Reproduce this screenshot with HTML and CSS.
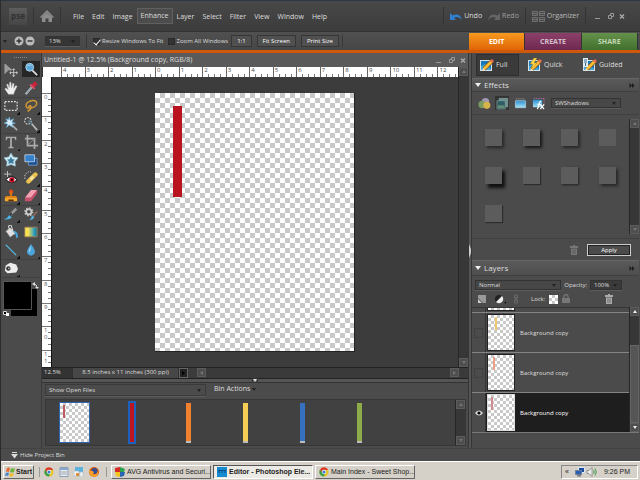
FILE: index.html
```
<!DOCTYPE html>
<html lang="en">
<head>
<meta charset="utf-8">
<title>Editor</title>
<link rel="stylesheet" href="styles.css">
</head>
<body>
<svg class="defs" aria-hidden="true">
  <defs>
    <linearGradient id="rainbow"><stop offset="0" stop-color="#fff04c"/><stop offset=".3" stop-color="#f2dc5a"/><stop offset=".75" stop-color="#2f9fbd"/><stop offset="1" stop-color="#14709f"/></linearGradient>
    <linearGradient id="sky" x2="0" y2="1"><stop offset="0" stop-color="#2b8fd0"/><stop offset="1" stop-color="#a8e2f6"/></linearGradient>
    <symbol id="mode" viewBox="0 0 14 14"><path fill="#d6e2e8" d="M0 2h12v11H0z"/><path fill="#1678b8" d="M1 3h10v9H1z"/><path fill="#44a6d8" d="M1 8l4-2 6 5v1H1z"/><path stroke="#7a4510" stroke-width="4" d="M4 11l8-8"/><path stroke="#f8bd36" stroke-width="3" d="M4 11l8-8"/><path fill="#f5e2bd" d="M2 13l1-3 2 2z"/><path stroke="#e56b55" stroke-width="3" d="M11 4l2-2"/></symbol>
    <symbol id="trash" viewBox="0 0 8 10"><path fill="currentColor" d="M3 0h2v1h3v2H0V1h3zM1 3.500h6V10H1z"/><path stroke="#4b4b4b" stroke-width=".6" d="M3 4.500V9M5 4.500V9"/></symbol>
    <symbol id="chrome" viewBox="0 0 12 12"><circle cx="6" cy="6" r="5.500" fill="#e9c62f"/><path fill="#d83a2f" d="M1.200 3.200A5.500 5.500 0 0 1 11 3.500H6L4 7z"/><path fill="#3a9b4a" d="M1.200 3.200L4 7l3 2-1 2.500A5.500 5.500 0 0 1 1.200 3.200"/><circle cx="6" cy="6" r="2.600" fill="#fff"/><circle cx="6" cy="6" r="1.900" fill="#3b79c9"/></symbol>
    <symbol id="winctl" viewBox="0 0 32 8"><path fill="none" stroke="#999" d="M2 6.500h5M15.500 3.500h3v3h-3zM17.500 3v-1.500h3v3H19"/><path stroke="#aaa" stroke-width="1.300" d="M27 2.500l4 4M31 2.500l-4 4"/></symbol>
    <symbol id="ff" viewBox="0 0 6 6"><path fill="#1c1c1c" d="M0 0l3 3-3 3zM3 0l3 3-3 3z"/></symbol>
  </defs>
</svg>
<div class="app">
  <header class="menubar">
    <span class="logo">pse</span>
    <button class="home" aria-label="Home"><svg width="16" height="14" viewBox="0 0 16 14"><path fill="#888" d="M8 1l7 7-1 1-6-5-6 5-1-1z"/><path fill="#8c8c8c" d="M3 8l5-4 5 4v5H9.500V9.500h-3V13H3z"/></svg></button>
    <nav class="menus"><a href="#">File</a><a href="#">Edit</a><a href="#">Image</a><a href="#" class="hot">Enhance</a><a href="#">Layer</a><a href="#">Select</a><a href="#">Filter</a><a href="#">View</a><a href="#">Window</a><a href="#">Help</a></nav>
    <div class="history">
      <button><svg width="12" height="9" viewBox="0 0 12 9"><path fill="#2f80d0" d="M0 1v7h6L4 6q4-3 8 2Q10 0 2.500 3.500z"/></svg>Undo</button>
      <button class="dim"><svg width="12" height="9" viewBox="0 0 12 9"><path fill="#656565" d="M12 1v7H6l2-2Q4 3 0 8 2 0 9.500 3.500z"/></svg>Redo</button>
    </div>
    <button class="organizer"><svg width="13" height="11" viewBox="0 0 13 11"><path fill="#4b4b4b" stroke="#707070" d="M.5.500h5v4h-5zM7.500.500h5v4h-5zM.5 6.500h5v4h-5zM7.500 6.500h5v4h-5zM1 2.500h4M8 2.500h4M1 8.500h4M8 8.500h4"/></svg>Organizer</button>
    <button class="winctl" aria-label="Window controls"><svg width="32" height="8"><use href="#winctl"/></svg></button>
  </header>

  <div class="options">
    <span class="caret"></span>
    <div class="zoomers">
      <button aria-label="Zoom in"><svg width="10" height="10" viewBox="0 0 10 10"><circle cx="5" cy="5" r="4.500" fill="#bbb"/><path stroke="#333" stroke-width="1.400" d="M2.500 5h5M5 2.500v5"/></svg></button>
      <button aria-label="Zoom out"><svg width="10" height="10" viewBox="0 0 10 10"><circle cx="5" cy="5" r="4.500" fill="#bbb"/><path stroke="#333" stroke-width="1.400" d="M2.500 5h5"/></svg></button>
    </div>
    <label class="pick zoomval"><select aria-label="Zoom"><option>13%</option></select></label>
    <div class="checks">
      <label><input type="checkbox" checked>Resize Windows To Fit</label>
      <label><input type="checkbox">Zoom All Windows</label>
    </div>
    <div class="opts"><button>1:1</button><button>Fit Screen</button><button>Print Size</button></div>
    <nav class="tabs"><a href="#" class="edit">EDIT</a><a href="#" class="create">CREATE</a><a href="#" class="share">SHARE</a></nav>
  </div>

  <main class="work">
    <aside class="tools">
      <div class="grip"></div>
      <div class="group">
        <button aria-label="Move"><svg viewBox="0 0 16 16"><path fill="#999" stroke="#bbb" stroke-width=".6" d="M1 1l8 7H5l-4 4z"/><path stroke="#c9c9c9" d="M11 7v8M7 11h8"/><path fill="#c9c9c9" d="M11 6l2 2H9zM11 16l2-2H9zM6 11l2-2v4zM16 11l-2-2v4z"/></svg></button>
        <button class="on" aria-label="Zoom"><svg viewBox="0 0 16 16"><path stroke="#ddd" stroke-width="2" d="M9 9l6 6"/><circle cx="6.500" cy="6" r="4.500" fill="#5fa9da" stroke="#b9dcf0"/><path fill="#9bd0ef" d="M3 5q3-4 6-1-3 0-6 1"/></svg></button>
        <button aria-label="Hand"><svg viewBox="0 0 16 16"><path fill="#eee" stroke="#bbb" stroke-width=".5" d="M5 15L1 9l1-1 3 2-2-6 1.500-.5L6 8l.5-6.500H8L8.500 8 10 2.500l1.500.5L11 8.500 13.500 5l1.500 1-3 6-1 3z"/></svg></button>
        <button aria-label="Eyedropper"><svg viewBox="0 0 16 16"><path stroke="#b9c8ce" stroke-width="2.500" d="M2 15l7-8"/><path stroke="#65767c" stroke-width=".8" d="M3 14l6-7"/><path stroke="#c8243d" stroke-width="4.500" d="M9 7l5-5"/><path stroke="#e4566b" stroke-width="2" d="M7 4l5 5"/></svg></button>
      </div>
      <div class="group">
        <button class="more" aria-label="Marquee"><svg viewBox="0 0 16 16"><path fill="none" stroke="#e4e4e4" stroke-width="1.300" stroke-dasharray="2 1.500" d="M1 3h14v10H1z"/></svg></button>
        <button class="more" aria-label="Lasso"><svg viewBox="0 0 16 16"><path fill="none" stroke="#cf9735" stroke-width="1.700" d="M5 11Q0 8 4 4q6-4 10-1 2 5-5 7-5 1-3-2 2-1 2 1 0 3-4 5"/></svg></button>
        <button aria-label="Magic wand"><svg viewBox="0 0 16 16"><path stroke="#aaa" stroke-width="2" d="M7 7l8 8"/><path fill="#d7edfa" stroke="#5badd8" stroke-width=".7" d="M6 0l1 4 4-2-2 4 4 1-4 1 1 4-4-3-3 3 1-4-4-1 4-2-2-3 3 1z"/></svg></button>
        <button class="more" aria-label="Quick selection"><svg viewBox="0 0 16 16"><circle cx="4.500" cy="4.500" r="3.700" fill="none" stroke="#ddd" stroke-width="1.200" stroke-dasharray="2 1.200"/><path stroke="#5c7988" stroke-width="2.500" d="M5 4l5 5"/><path stroke="#bbb" stroke-width="1.800" d="M9 8l6 7"/></svg></button>
      </div>
      <div class="group">
        <button class="more" aria-label="Type"><svg viewBox="0 0 16 16"><path fill="#aaa" d="M2 2h12v4h-1q0-2-2-2.500H9V13l2 1v1H5v-1l2-1V3.500H5Q3 4 3 6H2z"/></svg></button>
        <button aria-label="Crop"><svg viewBox="0 0 16 16"><path fill="none" stroke="#aaa" stroke-width="2" d="M4 0v12h12M1 4h11v12"/><path stroke="#888" d="M4 12l9-9"/></svg></button>
        <button aria-label="Cookie cutter"><svg viewBox="0 0 16 16"><path fill="#d3edf5" stroke="#8ebccd" stroke-width=".8" d="M8 0l2.500 4.500L16 5.500 12.500 10l.5 5-5-2-5 2 .5-5L0 5.500l5.500-1z"/><path fill="#3c7e9b" d="M8 4l1.500 3 3 .5-2 2 .5 3-3-1-3 1 .5-3-2-2 3-.5z"/></svg></button>
        <button aria-label="Straighten"><svg viewBox="0 0 16 16"><path fill="#1d4f91" stroke="#8fb8e0" stroke-width=".7" d="M5 6h10v8H5z"/><path fill="#3580cb" stroke="#d8e6f2" stroke-width=".8" d="M1 2h11v8H1z"/></svg></button>
        <button aria-label="Red eye"><svg viewBox="0 0 16 16"><path stroke="#ccc" d="M4 0v7M0 3.500h8"/><path fill="#fff" stroke="#000" d="M2 10q6-7 13 0-6 6-13 0"/><circle cx="9" cy="10" r="3" fill="#d30f28"/><circle cx="9" cy="10" r="1.200"/></svg></button>
        <button class="more" aria-label="Healing"><svg viewBox="0 0 16 16"><path fill="none" stroke="#ddd" stroke-dasharray="1.500 1.500" d="M1 9V4l4-3h3"/><path stroke="#eac252" stroke-width="5" stroke-linecap="round" d="M5 12l8-8"/><path stroke="#f8e4a0" stroke-width="3.500" d="M7.500 9.500l3-3"/></svg></button>
        <button class="more" aria-label="Clone stamp"><svg viewBox="0 0 16 16"><circle cx="8" cy="3" r="2.500" fill="#df4e16"/><path fill="#df7d17" d="M7 4h2v4h5l1 3H1l1-3h5z"/><path fill="#f4a92c" d="M1 10h14v4H1z"/><path fill="#613408" d="M5 12h6v2H5z"/></svg></button>
        <button class="more" aria-label="Eraser"><svg viewBox="0 0 16 16"><path fill="#f69fb0" d="M8 1h7L8 10H1z"/><path fill="#c9506b" d="M1 10h7l7-9v4l-7 9H1z"/></svg></button>
      </div>
      <div class="group">
        <button class="more" aria-label="Brush"><svg viewBox="0 0 16 16"><path stroke="#9b9b9b" stroke-width="3" d="M7 9l7-7"/><path stroke="#333" stroke-width="2" d="M6 10l3-3"/><path fill="#4cb4e4" d="M6 9l3 3q-3 3-9 2 4-1 6-5"/></svg></button>
        <button class="more" aria-label="Smart brush"><svg viewBox="0 0 16 16"><circle cx="5.500" cy="5.500" r="3" fill="none" stroke="#ccc" stroke-width="2"/><circle cx="5.500" cy="5.500" r="4.500" fill="none" stroke="#ccc" stroke-width="1.500" stroke-dasharray="1.800 1.700"/><path stroke="#8b6758" stroke-width="2" d="M10 11l5-6"/><path fill="#55b4e0" d="M9 9l3 3q-2 3-6 3 3-2 3-6"/></svg></button>
        <button aria-label="Paint bucket"><svg viewBox="0 0 16 16"><path fill="#ddd" stroke="#777" stroke-width=".7" d="M7 3l7 6-7 5-5-7z"/><path fill="none" stroke="#eee" d="M7 8L5 1l3-1 2 6"/><path fill="#46a4dc" d="M10 7q6-1 6 7l-2 1-1-5z"/></svg></button>
        <button aria-label="Gradient"><svg viewBox="0 0 16 16"><path fill="url(#rainbow)" stroke="#a88452" d="M1 2.500h14v11H1z"/></svg></button>
        <button class="more" aria-label="Line"><svg viewBox="0 0 16 16"><path stroke="#55b7df" stroke-width="1.300" d="M2 2l12 12"/></svg></button>
        <button class="more" aria-label="Blur"><svg viewBox="0 0 16 16"><path fill="#4ba4dc" d="M8 1q6 8 4 11-4 5-8 0Q2 9 8 1"/><path fill="#9bd5f3" d="M8 3q-4 6-2 8 2-3 2-8"/></svg></button>
      </div>
      <div class="group">
        <button class="more" aria-label="Sponge"><svg viewBox="0 0 16 16"><path fill="#eee" d="M2 5l5-3 7 2 2 5-2 4-10 1-3-3z"/><circle cx="5" cy="8.500" r="2.500" fill="#333"/><circle cx="5.500" cy="8.500" r="1" fill="#aaa"/></svg></button>
      </div>
      <div class="colors"><svg width="36" height="36" viewBox="0 0 36 36"><path d="M8 8h26v27H8z"/><path stroke="#555" d="M.5.500h28v28H.5z"/><path fill="none" stroke="#ddd" d="M31 3q3 0 3 4"/><path fill="#ddd" d="M29 3l3-2v4zM32 6h4l-2 2z"/><path fill="#000" stroke="#ddd" d="M.5 30.500h3v3h-3z"/><path fill="#fff" d="M3 32h3v3H3z"/></svg></div>
    </aside>

    <section class="doc">
      <div class="doctitle"><span>Untitled-1 @ 12.5% (Background copy, RGB/8)</span><svg width="32" height="8"><use href="#winctl"/></svg></div>
      <div class="hruler"><div class="inches"><i>4</i><i>3</i><i>2</i><i>1</i><i>0</i><i>1</i><i>2</i><i>3</i><i>4</i><i>5</i><i>6</i><i>7</i><i>8</i><i>9</i><i>10</i><i>11</i><i>12</i></div></div>
      <div class="vruler"><div class="inches"><i>0</i><i>1</i><i>2</i><i>3</i><i>4</i><i>5</i><i>6</i><i>7</i><i>8</i><i>9</i><i>1<br>0</i><i>1<br>1</i></div></div>
      <div class="stage"><div class="page checker"><div class="strip"></div></div></div>
      <div class="scroll docscroll"><b class="up"></b><b class="down"></b></div>
      <div class="status"><span class="pct">12.5%</span><span class="size">8.5 inches x 11 inches (300 ppi)</span><button class="play" aria-label="Status menu"></button><div class="hscroll"><b class="left"></b><b class="right"></b></div></div>
    </section>

    <section class="bin">
      <div class="splitter"><span class="caret"></span></div>
      <div class="binbar"><label class="pick"><select aria-label="Files shown"><option>Show Open Files</option></select></label><button class="actions">Bin Actions <span class="caret"></span></button></div>
      <div class="thumbs">
        <div class="files"><div><span class="thumb checker"><span class="mini"></span></span></div><div><span class="bar red"></span></div><div><span class="bar orange"></span></div><div><span class="bar yellow"></span></div><div><span class="bar blue"></span></div><div><span class="bar green"></span></div></div>
        <div class="scroll"><b class="up"></b><b class="down"></b></div>
      </div>
    </section>

    <div class="divider"><span></span></div>

    <aside class="panels">
      <nav class="modes"><a href="#" class="on"><svg width="14" height="14"><use href="#mode"/></svg>Full</a><a href="#"><svg width="14" height="14" viewBox="0 0 14 14"><use href="#mode"/><path fill="#ffdc4b" stroke="#b67b13" stroke-width=".5" d="M6 0L2 6h3L3 11l6-6H6l3-5z"/></svg>Quick</a><a href="#"><svg width="14" height="14" viewBox="0 0 14 14"><use href="#mode"/><path fill="#e2edf4" d="M0 0h5v9H0z"/><path stroke="#386b92" d="M1 2h3M1 4h3M2.500 5v3"/></svg>Guided</a></nav>
      <h2><span class="tri"></span>Effects<svg class="ff" width="6" height="5"><use href="#ff"/></svg></h2>
      <div class="fxbar">
        <button aria-label="Filters"><svg viewBox="0 0 14 14"><circle cx="8" cy="5" r="4" fill="#a298b4"/><circle cx="4.500" cy="8" r="4" fill="#7a9a62"/><circle cx="9.500" cy="9" r="3.800" fill="#d6b347"/></svg></button>
        <button class="on" aria-label="Layer styles"><svg viewBox="0 0 14 14"><path fill="#728f92" d="M3 1h10v10H3z"/><path fill="#305c66" stroke="#8aa59f" stroke-width=".7" d="M1 4h9v9H1z"/><path fill="#648e75" d="M2 9h7v3H2z"/></svg></button>
        <button aria-label="Photo effects"><svg viewBox="0 0 14 14"><path stroke="#aaa" stroke-dasharray="1 1" d="M2 2h10"/><path fill="url(#sky)" stroke="#b2d8e6" stroke-width=".7" d="M1.500 4h11v7.500h-11z"/></svg></button>
        <button aria-label="All effects"><svg viewBox="0 0 14 14"><path stroke="#c276b0" stroke-dasharray="1 1" d="M2 1.500h11M13 2v8"/><path fill="url(#sky)" d="M1 3h10v8H1z"/><path fill="none" stroke="#fff" stroke-width="1.300" d="M10 5Q8 4 7.500 8t-2 5M6 8h3M9 8l4 5M13 8l-4 5"/></svg></button>
        <label class="pick"><select aria-label="Style library"><option>SWShadows</option></select></label>
      </div>
      <div class="fx">
        <div class="swatches"><span class="s3"></span><span class="s4"></span><span class="s3"></span><span></span><span class="s5"></span><span class="s1"></span><span class="s2"></span><span class="s3"></span><span class="s1"></span></div>
        <div class="scroll"><b class="up"></b><b class="down"></b></div>
      </div>
      <div class="apply"><svg class="dimtrash" width="8" height="10"><use href="#trash"/></svg><button>Apply</button></div>
      <h2><span class="tri"></span>Layers<svg class="ff" width="6" height="5"><use href="#ff"/></svg></h2>
      <div class="blend"><label class="pick"><select aria-label="Blend mode"><option>Normal</option></select></label><label for="opacity">Opacity:</label><span class="pick op"><select id="opacity"><option>100%</option></select></span></div>
      <div class="locks">
        <svg width="52" height="10" viewBox="0 0 52 10"><path fill="#999" d="M3 1h8v8H8L3 4z"/><path fill="#ccc" d="M3 5l4 4H3z"/><circle cx="24" cy="5" r="4" fill="#222"/><path fill="#eee" d="M27 2a4 4 0 0 1-6 6z"/><path fill="#111" d="M29 8h2v2z"/><path fill="none" stroke="#6b6b6b" d="M39.500 1h3v3h-3zM39.500 6h3v3h-3zM41 3v4"/></svg>
        <span class="locklabel">Lock:</span>
        <span class="lockpx checker"></span>
        <svg width="8" height="10" viewBox="0 0 8 10"><path fill="none" stroke="#777" stroke-width="1.300" d="M2 5V2q2-3 4 0v3"/><path fill="#777" d="M0 4h8v5H0z"/></svg>
        <svg class="bintrash" width="8" height="10"><use href="#trash"/></svg>
      </div>
      <div class="layers">
        <div class="rows">
          <div class="row cut"><span class="eye"></span><span class="lt checker"></span></div>
          <div class="row"><span class="eye"><i></i></span><span class="lt checker"><span class="mini y"></span></span>Background copy</div>
          <div class="row"><span class="eye"><i></i></span><span class="lt checker"><span class="mini o"></span></span>Background copy</div>
          <div class="row sel"><span class="eye"><svg width="8" height="6" viewBox="0 0 8 6"><path fill="#ddd" d="M0 3q4-5 8 0-4 5-8 0"/><circle cx="4" cy="3" r="1.600"/></svg></span><span class="lt checker"><span class="mini"></span></span>Background copy</div>
        </div>
        <div class="scroll lit"><b class="up"></b><u></u><b class="down"></b></div>
      </div>
    </aside>
  </main>

  <div class="hidebar"><svg width="7" height="7" viewBox="0 0 7 7"><path fill="#ddd" d="M1 0h5v1H1zM0 2h7L3.500 6.500z"/></svg>Hide Project Bin</div>

  <footer class="taskbar">
    <button class="start"><svg width="11" height="10" viewBox="0 0 11 10"><path fill="#e7652b" d="M2 1q2-1 3 0L4 5Q3 4 1 5z"/><path fill="#6fb33f" d="M6 1q2 1 4 0L9 5Q7 6 5 5z"/><path fill="#4282cf" d="M1 6q2-1 3 0L3 9Q2 8 0 9z"/><path fill="#efbd2b" d="M5 6q2 1 4 0L8 9Q6 10 4 9z"/></svg>Start</button>
    <div class="quick">
      <svg width="10" height="10"><use href="#chrome"/></svg>
      <svg width="10" height="10" viewBox="0 0 10 10"><path fill="#e8edf2" stroke="#8b9db4" d="M1 .5h8v9H1z"/><path fill="#89a8cf" d="M1 1h8v2H1z"/><path stroke="#9ba7b5" d="M2 5h6M2 7h6"/></svg>
      <svg width="10" height="10" viewBox="0 0 10 10"><path fill="#5cb1dd" d="M1 0h8v5H1z"/><path fill="#f4f6f7" stroke="#9fb6c5" stroke-width=".6" d="M0 4h5v5H0zM6 5h3v5H6z"/><path fill="#e18d3b" d="M2 6h3v3H2z"/></svg>
      <svg width="10" height="10" viewBox="0 0 10 10"><circle cx="5" cy="5" r="5" fill="#dc5d18"/><circle cx="5.500" cy="4" r="3" fill="#344c91"/><path fill="#f7a128" d="M0 3q2 1 3 1l2 1-1 2q3 2 5-3 1 5-4 6-5-1-5-7"/></svg>
    </div>
    <button class="task"><svg width="10" height="10" viewBox="0 0 10 10"><path fill="#d92b26" d="M0 1l5-1v5H0z"/><path fill="#2aa24b" d="M5 0l5 2-1 3H5z"/><path fill="#f3c51c" d="M0 5h5v5L1 9z"/><path fill="#2864b4" d="M5 5h5L9 9l-4 1z"/></svg><span>AVG Antivirus and Securi...</span></button>
    <button class="task on"><svg width="10" height="10" viewBox="0 0 10 10"><path fill="#168bd2" d="M0 0h10v10H0z"/><path stroke="#0a4f86" d="M1 5h2M4 5h2M7 5h2M1 3.500h8"/></svg><span>Editor - Photoshop Ele...</span></button>
    <button class="task"><svg width="10" height="10"><use href="#chrome"/></svg><span>Main Index - Sweet Shop...</span></button>
    <div class="tray"><span>«</span><svg width="22" height="10" viewBox="0 0 22 10"><path fill="#1d4b9f" stroke="#dce6f2" d="M3.500.500h6v5h-6z"/><path fill="#2b5fb4" stroke="#6f7f96" d="M.5 3.500h6v4h-6z"/><path fill="#777" d="M2 8h4v1.500H2z"/><path fill="#eee" stroke="#777" stroke-width=".7" d="M12 3.500h2l3-3v9l-3-3h-2z"/><path fill="none" stroke="#4a9c53" d="M18.500 3q1.500 2 0 4M20 1.500q2.500 3.500 0 7"/></svg><time>9:26 PM</time></div>
  </footer>
</div>
</body>
</html>
```
FILE: styles.css
```
* { box-sizing: border-box; }
html, body { margin: 0; height: 100%; }
body { font: 6px/10px "Open Sans", "Noto Sans", sans-serif; color: #dedede; background: #4b4b4b; overflow: hidden; }
button, select, input { font: inherit; color: inherit; margin: 0; padding: 0; border: 0; background: none; }
button { display: flex; align-items: center; justify-content: center; }
a { color: inherit; text-decoration: none; }
svg { display: block; flex: none; }
i, b, u { font-style: normal; font-weight: inherit; text-decoration: none; }
.defs { position: absolute; width: 0; height: 0; }
.checker { background: conic-gradient(#c9c9c9 25%, #fff 0 50%, #c9c9c9 0 75%, #fff 0) 0 0 / 10px 10px; }
.caret { width: 0; height: 0; border: 2px solid transparent; border-top: 3px solid #222; border-bottom: 0; }

.app { height: 100vh; display: grid; grid-template-rows: 31px 22px minmax(0, 1fr) 13px 19px; border-left: 1px solid #2c2c2c; }

.menubar { display: flex; align-items: center; font-size: 7px; background: linear-gradient(#484848, #3c3c3c); border-top: 1px solid #2c3746; }
.logo { width: 18px; height: 17px; margin-left: 8px; font-size: 8px; line-height: 15px; font-weight: 700; text-align: center; color: #303030; background: linear-gradient(#5d5d5d, #454545); }
.home { width: 28px; height: 18px; margin-left: 6px; border: 1px solid #353535; border-width: 0 1px; }
.menus { display: flex; align-items: center; margin-left: 8px; }
.menus a { padding: 0 4px; line-height: 13px; }
.menus .hot { line-height: 14px; border: 1px solid #606060; background: #4c4c4c; padding: 0 3px; }
.history { display: flex; gap: 6px; margin-left: auto; height: 18px; padding: 0 6px; border: 1px solid #333; border-width: 0 1px; }
.history button, .organizer { gap: 2px; }
.history .dim { color: #a0a0a0; }
.organizer { height: 18px; padding: 0 6px; border-right: 1px solid #333; color: #bbb; }
.winctl { margin: 0 15px 0 7px; }

.options { display: flex; align-items: center; padding-left: 2px; background: linear-gradient(#505050, #474747); border-top: 1px solid #333; border-bottom: 3px solid #d0580a; }
.zoomers { display: flex; gap: 1px; margin-left: 7px; }
.pick { display: flex; align-items: center; height: 10px; border: 1px solid #333; background: #474747; box-shadow: 0 1px #5c5c5c; }
.pick::after { content: ""; margin: 0 4px 0 -8px; border: 2px solid transparent; border-top: 3px solid #222; border-bottom: 0; pointer-events: none; }
.pick select { appearance: none; width: 100%; min-width: 0; height: 8px; line-height: 8px; padding: 0 3px; outline: 0; }
.zoomval { width: 35px; margin-left: 10px; background: #353535; }
.checks { display: flex; gap: 4px; margin-left: 6px; padding-left: 6px; border-left: 1px solid #383838; }
.checks label { display: flex; align-items: center; gap: 2px; line-height: 14px; }
.checks input { appearance: none; width: 7px; height: 7px; background: #333; border: 1px solid #292929; }
.checks input:checked::after { content: ""; display: block; width: 3px; height: 6px; border: 1px solid #fff; border-width: 0 1px 1px 0; transform: rotate(40deg); margin: -1px 0 0 1px; }
.opts { display: flex; gap: 5px; margin-left: 3px; padding-right: 3px; border-right: 1px solid #383838; }
.opts button { height: 12px; padding: 0 5px; border: 1px solid #363636; background: #505050; color: #fff; }
.tabs { display: flex; align-self: stretch; margin: 1px 2px 0 auto; width: 169px; text-align: center; font-size: 7px; font-weight: 700; line-height: 18px; }
.tabs a { flex: 1; color: #d2c0cc; border-right: 1px solid #333; }
.tabs .edit { background: linear-gradient(#f79a1e, #df6407); color: #fff; }
.tabs .create { background: linear-gradient(#8c4069, #6f2850); }
.tabs .share { background: linear-gradient(#65924a, #41702e); color: #c0d6b4; }

.work { display: grid; grid-template: minmax(0, 1fr) 70px / 41px minmax(0, 1fr) 4px 168px; min-height: 0; }

.tools { grid-row: 1 / 3; padding: 3px 0 0 1px; border-right: 1px solid #3a3a3a; }
.grip { width: 14px; height: 5px; margin-left: 12px; background: repeating-linear-gradient(90deg, #888 0 1px, transparent 1px 2px) 0 1px / 100% 1px no-repeat; }
.group { display: grid; grid-template-columns: 20px 18px; box-shadow: 0 1px #404040; }
.group button { width: 18px; height: 18px; }
.group svg { width: 14px; height: 14px; }
.group .on { height: 16px; background: #262626; }
.group .more { background: linear-gradient(135deg, transparent 50%, #111 0) right bottom / 3px 3px no-repeat; }
.colors { margin: 4px 0 0 1px; }

.doc { grid-column: 2; display: grid; grid-template: 14px 10px minmax(0, 1fr) 11px / 10px minmax(0, 1fr) 10px; min-height: 0; background: #3c3c3c; }
.doctitle { grid-row: 1; grid-column: 1 / 4; display: flex; align-items: center; justify-content: space-between; padding: 0 2px; font-size: 7px; background: #5a5a5a; }
.hruler { grid-row: 2; grid-column: 1 / 3; padding-left: 18px; overflow: hidden; background: #fff; color: #444; border-left: 1px solid #333; }
.hruler .inches { display: grid; grid-template-columns: repeat(17, 1fr); width: 400px; height: 10px; }
.hruler i { line-height: 7px; padding-left: 1px; border-left: 1px solid #666; background: repeating-linear-gradient(90deg, transparent 0 5px, #777 5px 6px) 0 100% / 100% 3px no-repeat; }
.vruler { grid-row: 3; overflow: hidden; padding-top: 16px; background: #fff; color: #555; border-right: 1px solid #111; }
.vruler .inches { display: grid; grid-template-rows: repeat(12, 1fr); height: 280px; }
.vruler i { line-height: 7px; padding-left: 2px; border-top: 1px solid #777; background: repeating-linear-gradient(transparent 0 5px, #777 5px 6px) 100% 0 / 3px 100% no-repeat; }
.stage { grid-row: 3; padding: 16px 0 0 103px; overflow: hidden; }
.page { width: 200px; height: 259px; padding: 13px 0 0 18px; border-right: 1px solid #222; border-bottom: 1px solid #222; }
.strip { width: 9px; height: 91px; background: #b9131f; }
.docscroll { grid-column: 3; grid-row: 2 / 4; }
.status { grid-column: 1 / 4; display: flex; line-height: 9px; border-top: 1px solid #222; }
.pct { width: 30px; padding-left: 2px; background: #333; }
.size { width: 107px; text-align: center; background: #474747; border: 1px solid #303030; border-width: 0 1px; }
.play { width: 9px; background: #222; border: 1px solid #666; }
.play::after { content: ""; border: 2px solid transparent; border-left: 3px solid #000; border-right: 0; }
.hscroll { flex: 1; display: flex; justify-content: space-between; margin-left: 9px; padding-right: 9px; background: #3a3a3a; }

.scroll { width: 10px; display: flex; flex-direction: column; justify-content: space-between; background: #373737; border-left: 1px solid #262626; }
.scroll b, .hscroll b { width: 9px; height: 9px; display: flex; align-items: center; justify-content: center; background: #4e4e4e; border: 1px solid #5c5c5c; }
.scroll b::after, .hscroll b::after { content: ""; border: 2px solid transparent; }
.scroll .up::after { border-bottom: 3px solid #757575; border-top: 0; }
.scroll .down::after { border-top: 3px solid #757575; border-bottom: 0; }
.hscroll .left::after { border-right: 3px solid #757575; border-left: 0; }
.hscroll .right::after { border-left: 3px solid #757575; border-right: 0; }
.scroll u { height: 78px; margin: auto 0 0; background: #555; border: 1px solid #666; }
.lit .up::after { border-bottom-color: #eee; }
.lit .down::after { border-top-color: #eee; }

.bin { grid-column: 2; grid-row: 2; display: grid; grid-template-rows: 4px 16px 1fr; border-top: 1px solid #222; }
.splitter { display: flex; justify-content: center; background: #555; border-bottom: 1px solid #333; }
.splitter .caret { border-top-color: #ddd; outline: 1px solid #333; }
.binbar { display: flex; gap: 8px; padding: 1px 2px 0 3px; }
.binbar .pick { width: 161px; height: 12px; background: #4b4b4b; border-color: #3a3a3a; }
.actions { height: 10px; gap: 2px; font-size: 7px; }
.thumbs { display: flex; min-width: 0; margin: 0 2px 2px 3px; border: 1px solid #373737; background: #414141; }
.files { flex: 1; display: flex; }
.files div { width: 57px; display: flex; justify-content: center; align-items: center; }
.thumb { width: 31px; height: 41px; padding: 2px; border: 1px solid #2f66b4; background-size: 6px 6px; }
.mini { display: block; width: 2px; height: 13px; margin-left: 1px; background: #c05a60; }
.bar { width: 5px; height: 40px; border-bottom: 2px solid #bbb; }
.red { width: 8px; height: 43px; background: #bd1622; border: 2px solid #1c62bd; }
.orange { background: #f1812f; }
.yellow { background: #f6cc55; }
.blue { background: #3571bf; }
.green { background: #8dac49; }

.divider { grid-column: 3; grid-row: 1 / 3; display: flex; align-items: center; background: #555; border: 1px solid #363636; border-width: 0 1px; }
.divider span { height: 14px; border: 2px solid #3a3a3a; border-width: 5px 0; border-left: 2px solid #ccc; border-top-color: transparent; border-bottom-color: transparent; }

.panels { grid-column: 4; grid-row: 1 / 3; display: grid; grid-template-rows: 25px 14px 23px minmax(0, 1fr) 21px 16px 15px 16px 126px 15px; padding-right: 1px; }
.panels h2 { display: flex; align-items: center; gap: 3px; margin: 0; padding: 0 4px 0 3px; font-size: 8px; line-height: 12px; font-weight: 400; background: linear-gradient(#5a5a5a, #4e4e4e); border-top: 1px solid #666; border-bottom: 1px solid #404040; }
.tri { border: 3px solid transparent; border-top: 4px solid #eee; border-bottom: 0; }
.ff { margin-left: auto; }
.modes { display: grid; grid-template-columns: 43px 50px 1fr; gap: 5px; padding: 1px 4px 2px; font-size: 7px; }
.modes a { display: flex; align-items: center; gap: 2px; padding-left: 4px; }
.modes .on { background: #3a3a3a; border: 1px solid #2d2d2d; padding-left: 3px; }
.fxbar { display: flex; align-items: center; gap: 4px; padding: 0 18px 0 5px; border-bottom: 1px solid #404040; }
.fxbar button { width: 14px; height: 14px; }
.fxbar button.on { background: #333; }
.fxbar svg { width: 13px; height: 13px; }
.fxbar .pick { margin-left: 2px; }
.fxbar .pick, .blend .pick { flex: 1; }
.fx { display: flex; justify-content: space-between; padding: 4px 0; border-bottom: 1px solid #404040; }
.swatches { display: grid; grid-template: repeat(3, 17px) / repeat(4, 17px); gap: 21px; padding: 10px 0 0 13px; }
.swatches span { background: #5c5c5c; }
.swatches .s1 { box-shadow: 1px 1px 1px #2c2c2c; }
.swatches .s2 { box-shadow: 1px 1px 2px #222; }
.swatches .s3 { box-shadow: 2px 2px 3px #262626; }
.swatches .s4 { box-shadow: 2px 2px 3px #151515; }
.swatches .s5 { box-shadow: 3px 4px 3px #111; }
.apply { display: flex; align-items: center; justify-content: flex-end; gap: 9px; padding-right: 8px; }
.apply button { width: 44px; height: 12px; border: 1px solid #ccc; outline: 1px solid #222; outline-offset: -2px; color: #fff; }
.dimtrash { color: #777; }
.blend { display: flex; align-items: center; gap: 3px; padding: 3px 17px 0 3px; }
.blend .op { flex: 0 0 32px; background: #3a3a3a; }
.locks { display: flex; align-items: center; gap: 4px; padding-left: 3px; }
.lockpx { width: 9px; height: 9px; background-size: 6px 6px; }
.bintrash { margin: 0 26px 0 auto; color: #aaa; }
.layers { display: flex; min-height: 0; border-bottom: 1px solid #777; }
.rows { flex: 1; display: flex; flex-direction: column; }
.row { display: flex; align-items: center; height: 40px; border-top: 1px solid #858585; }
.cut { height: 5px; align-items: flex-start; border-top: 1px solid #363636; }
.cut .lt { height: 3px; border-top: 0; }
.eye { width: 14px; align-self: stretch; display: flex; align-items: center; justify-content: center; border-right: 1px solid #333; background: #4b4b4b; }
.eye i { width: 9px; height: 10px; border: 1px solid #404040; }
.lt { width: 28px; height: 37px; margin: 0 5px 0 1px; padding: 2px 0 0 6px; border: 1px solid #222; background-size: 6px 6px; }
.y { background: #efc76e; }
.o { background: #eca086; margin-left: -1px; }
.sel { background: #1e1e1e; color: #fff; }
.sel .lt { border-color: #ddd; }
.sel .mini { background: #d18c91; margin-left: -3px; }

.hidebar { display: flex; align-items: center; gap: 2px; padding-left: 10px; border-top: 1px solid #424242; }

.taskbar { display: flex; align-items: center; padding: 1px 2px 0; font: 7px/10px "Liberation Sans", sans-serif; color: #222; background: #d5d1c8; border-top: 1px solid #fff; }
.start, .task { height: 14px; background: #d5d1c8; border: 1px solid; border-color: #fff #666 #666 #fff; }
.start { width: 31px; font-weight: 700; }
.quick { display: flex; gap: 5px; margin: 0 4px 0 5px; padding: 0 7px 0 4px; border: 1px solid #999; border-width: 0 1px; }
.task { flex: 0 1 100px; min-width: 0; justify-content: flex-start; gap: 2px; margin-right: 2px; padding: 0 3px; white-space: nowrap; }
.task.on { background: #eceae5; border-color: #555 #fff #fff #555; font-weight: 700; }
.tray { display: flex; align-items: center; justify-content: space-between; width: 77px; height: 14px; margin-left: auto; padding: 0 7px 0 3px; border: 1px solid; border-color: #888 #fff #fff #888; }
```
